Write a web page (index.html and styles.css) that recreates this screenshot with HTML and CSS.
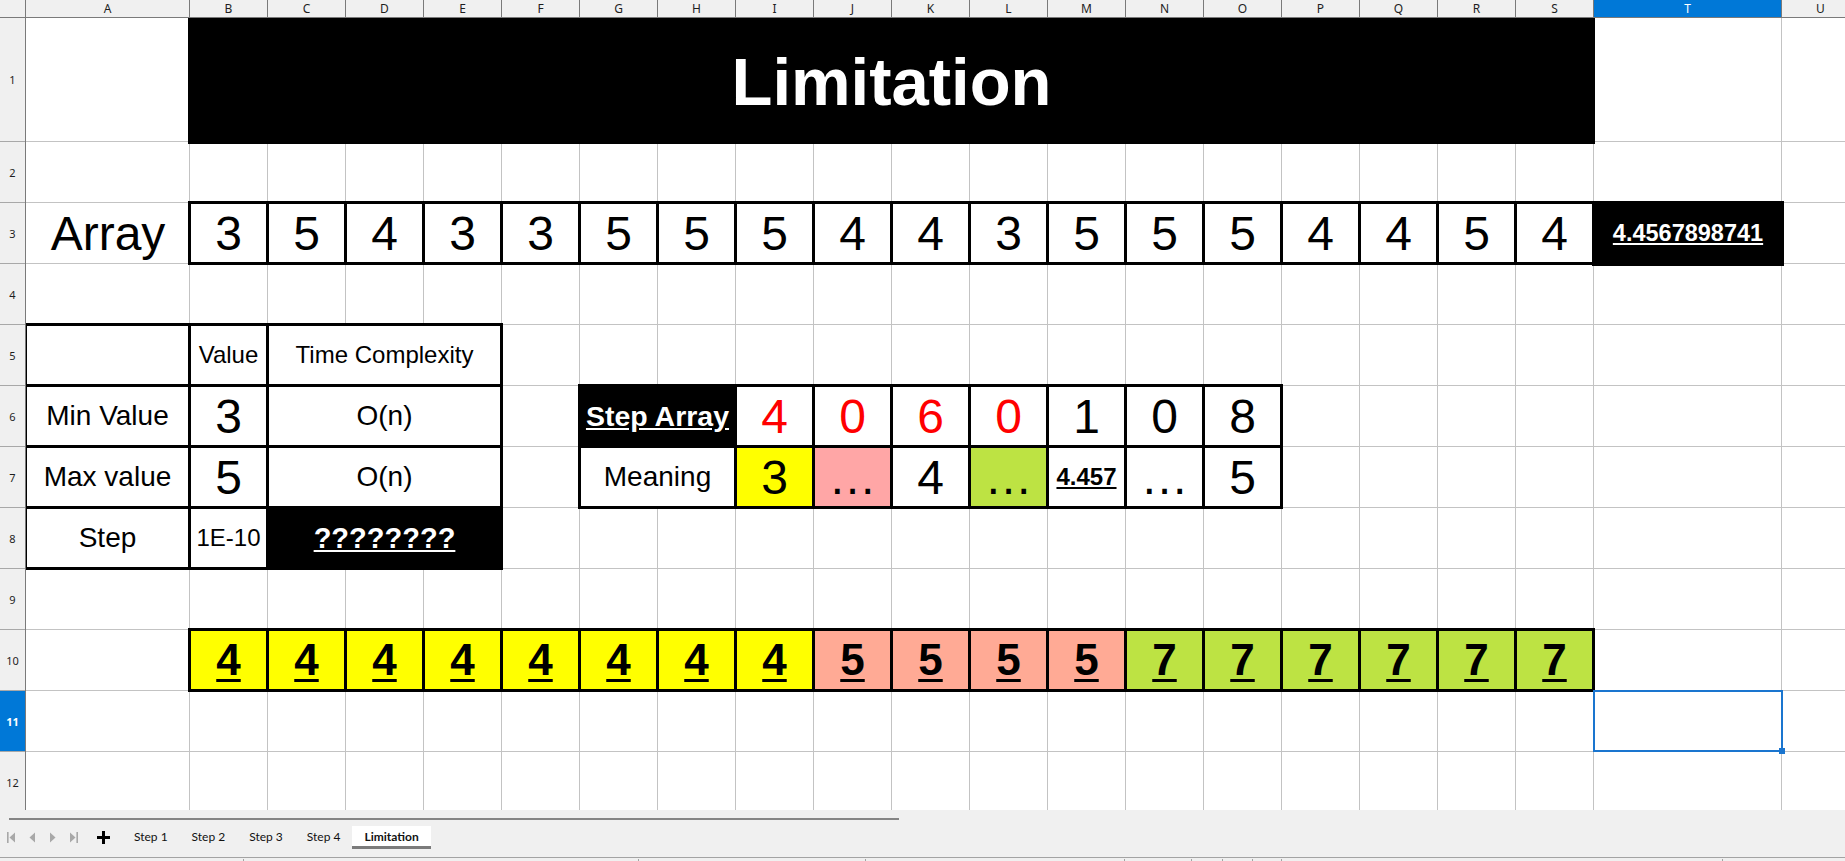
FILE: index.html
```html
<!DOCTYPE html>
<html lang="en">
<head>
<meta charset="utf-8">
<title>Limitation</title>
<link rel="stylesheet" href="styles.css">
</head>
<body>
<div class="frame">
  <div class="corner"></div>
  <div class="cols">
    <span>A</span><span>B</span><span>C</span><span>D</span><span>E</span><span>F</span><span>G</span><span>H</span><span>I</span><span>J</span><span>K</span><span>L</span><span>M</span><span>N</span><span>O</span><span>P</span><span>Q</span><span>R</span><span>S</span><span class="sel">T</span><span>U</span>
  </div>
  <div class="rows">
    <span>1</span><span>2</span><span>3</span><span>4</span><span>5</span><span>6</span><span>7</span><span>8</span><span>9</span><span>10</span><span class="sel">11</span><span>12</span>
  </div>
  <div class="sheet">
    <div class="title">Limitation</div>

    <div class="cell c1 r3 big">Array</div>
    <div class="cell bx big c2 r3">3</div>
    <div class="cell bx big c3 r3">5</div>
    <div class="cell bx big c4 r3">4</div>
    <div class="cell bx big c5 r3">3</div>
    <div class="cell bx big c6 r3">3</div>
    <div class="cell bx big c7 r3">5</div>
    <div class="cell bx big c8 r3">5</div>
    <div class="cell bx big c9 r3">5</div>
    <div class="cell bx big c10 r3">4</div>
    <div class="cell bx big c11 r3">4</div>
    <div class="cell bx big c12 r3">3</div>
    <div class="cell bx big c13 r3">5</div>
    <div class="cell bx big c14 r3">5</div>
    <div class="cell bx big c15 r3">5</div>
    <div class="cell bx big c16 r3">4</div>
    <div class="cell bx big c17 r3">4</div>
    <div class="cell bx big c18 r3">5</div>
    <div class="cell bx big c19 r3">4</div>
    <div class="cell hl c20 r3">4.4567898741</div>

    <div class="cell bx c1 r5"></div>
    <div class="cell bx sm c2 r5">Value</div>
    <div class="cell bx sm c3 s3 r5">Time Complexity</div>
    <div class="cell bx lbl c1 r6">Min Value</div>
    <div class="cell bx big c2 r6">3</div>
    <div class="cell bx lbl c3 s3 r6">O(n)</div>
    <div class="cell bx lbl c1 r7">Max value</div>
    <div class="cell bx big c2 r7">5</div>
    <div class="cell bx lbl c3 s3 r7">O(n)</div>
    <div class="cell bx lbl c1 r8">Step</div>
    <div class="cell bx sm c2 r8">1E-10</div>
    <div class="cell bx inv qm c3 s3 r8">????????</div>

    <div class="cell bx inv head c7 s2 r6">Step Array</div>
    <div class="cell bx big red c9 r6">4</div>
    <div class="cell bx big red c10 r6">0</div>
    <div class="cell bx big red c11 r6">6</div>
    <div class="cell bx big red c12 r6">0</div>
    <div class="cell bx big c13 r6">1</div>
    <div class="cell bx big c14 r6">0</div>
    <div class="cell bx big c15 r6">8</div>
    <div class="cell bx lbl c7 s2 r7">Meaning</div>
    <div class="cell bx big yel c9 r7">3</div>
    <div class="cell bx big pink c10 r7">…</div>
    <div class="cell bx big c11 r7">4</div>
    <div class="cell bx big lime c12 r7">…</div>
    <div class="cell bx mid c13 r7">4.457</div>
    <div class="cell bx big c14 r7">…</div>
    <div class="cell bx big c15 r7">5</div>

    <div class="cell bx res yel c2 r10">4</div>
    <div class="cell bx res yel c3 r10">4</div>
    <div class="cell bx res yel c4 r10">4</div>
    <div class="cell bx res yel c5 r10">4</div>
    <div class="cell bx res yel c6 r10">4</div>
    <div class="cell bx res yel c7 r10">4</div>
    <div class="cell bx res yel c8 r10">4</div>
    <div class="cell bx res yel c9 r10">4</div>
    <div class="cell bx res salmon c10 r10">5</div>
    <div class="cell bx res salmon c11 r10">5</div>
    <div class="cell bx res salmon c12 r10">5</div>
    <div class="cell bx res salmon c13 r10">5</div>
    <div class="cell bx res green c14 r10">7</div>
    <div class="cell bx res green c15 r10">7</div>
    <div class="cell bx res green c16 r10">7</div>
    <div class="cell bx res green c17 r10">7</div>
    <div class="cell bx res green c18 r10">7</div>
    <div class="cell bx res green c19 r10">7</div>

    <div class="cursor c20 r11"><i class="handle"></i></div>
  </div>
</div>

<div class="tabbar">
  <div class="thumb"></div>
  <div class="tabs">
    <div class="navbtn"><svg width="8" height="11" viewBox="0 0 8 11"><rect x="0" y="0" width="1.6" height="11" fill="#a8a8a8"/><path d="M8 0.5 L2.5 5.5 L8 10.5 Z" fill="#a8a8a8"/></svg></div>
    <div class="navbtn"><svg width="8" height="11" viewBox="0 0 8 11"><path d="M7 0.5 L1.5 5.5 L7 10.5 Z" fill="#a8a8a8"/></svg></div>
    <div class="navbtn"><svg width="8" height="11" viewBox="0 0 8 11"><path d="M1 0.5 L6.5 5.5 L1 10.5 Z" fill="#a8a8a8"/></svg></div>
    <div class="navbtn"><svg width="8" height="11" viewBox="0 0 8 11"><path d="M0 0.5 L5.5 5.5 L0 10.5 Z" fill="#a8a8a8"/><rect x="6.4" y="0" width="1.6" height="11" fill="#a8a8a8"/></svg></div>
    <div class="addbtn"><svg width="13" height="13" viewBox="0 0 13 13"><rect x="5" y="0" width="3" height="13" fill="#000"/><rect x="0" y="5" width="13" height="3" fill="#000"/></svg></div>
    <div class="tab">Step 1</div>
    <div class="tab">Step 2</div>
    <div class="tab">Step 3</div>
    <div class="tab">Step 4</div>
    <div class="tab active">Limitation</div>
  </div>
</div>

<div class="status">
  <div class="st pad">Sheet 5 of 5</div>
  <div class="st"></div>
  <div class="st pad2">Default</div>
  <div class="st mid-t">English (USA)</div>
  <div class="st"></div>
  <div class="st icon"><svg width="16" height="8" viewBox="0 0 16 8"><rect x="0.5" y="2.5" width="8" height="6" fill="none" stroke="#1a73c8"/><path d="M11 1.5 H15 M13 1.5 V8" stroke="#333" fill="none"/></svg></div>
  <div class="st icon"><svg width="10" height="8" viewBox="0 0 10 8"><rect x="0.5" y="0.5" width="9" height="9" fill="none" stroke="#d42020"/><rect x="2.5" y="0.5" width="5" height="3" fill="none" stroke="#d42020"/></svg></div>
  <div class="st"></div>
  <div class="st mid-t">Average: ; Sum: 0</div>
  <div class="st zoomer"><span class="minus"></span><span class="tick"></span><span class="bar"></span></div>
</div>
</body>
</html>
```
FILE: styles.css
```css
* { box-sizing: border-box; }
html, body { margin: 0; padding: 0; }
body {
  width: 1845px;
  height: 861px;
  overflow: hidden;
  background: #f0f0f0;
  font-family: "Liberation Sans", Arial, sans-serif;
  color: #000;
}

/* ---------- sheet frame ---------- */
.frame {
  display: grid;
  grid-template-columns: 26px 1819px;
  grid-template-rows: 18px 792px;
  height: 810px;
  overflow: hidden;
  background: #fff;
}
.corner {
  background: #f0f0f0;
  border-right: 1px solid #7a7a7a;
  border-bottom: 1px solid #7a7a7a;
}
.cols {
  display: grid;
  grid-template-columns: 164px repeat(18, 78px) 188px 78px;
  background: #f0f0f0;
  border-bottom: 1px solid #7a7a7a;
}
.cols span {
  display: flex;
  align-items: center;
  justify-content: center;
  border-right: 1px solid #7a7a7a;
  font: 12px "Noto Sans", sans-serif;
  color: #1e1e1e;
}
.cols .sel { background: #0078d7; color: #fff; }
.rows {
  display: grid;
  grid-template-rows: 124px repeat(12, 61px);
  background: #f0f0f0;
  border-right: 1px solid #7a7a7a;
}
.rows span {
  display: flex;
  align-items: center;
  justify-content: center;
  border-bottom: 1px solid #a8a8a8;
  font: 11px "Noto Sans", sans-serif;
  color: #1e1e1e;
}
.rows .sel { background: #0078d7; color: #fff; font-weight: bold; }

.sheet {
  display: grid;
  grid-template-columns: 164px repeat(18, 78px) 188px 78px;
  grid-template-rows: 124px repeat(12, 61px);
  overflow: hidden;
  position: relative;
  background-color: #fff;
  background-image:
    linear-gradient(#c3c3c3, #c3c3c3),
    linear-gradient(#c3c3c3, #c3c3c3),
    repeating-linear-gradient(to right, transparent 0 77px, #c3c3c3 77px 78px),
    linear-gradient(#c3c3c3, #c3c3c3),
    repeating-linear-gradient(to bottom, transparent 0 60px, #c3c3c3 60px 61px);
  background-size: 1px 100%, 1px 100%, 1404px 100%, 100% 1px, 100% 732px;
  background-position: 163px 0, 1755px 0, 164px 0, 0 123px, 0 124px;
  background-repeat: no-repeat;
}

/* placement */
.c1 { grid-column-start: 1; } .c2 { grid-column-start: 2; } .c3 { grid-column-start: 3; }
.c4 { grid-column-start: 4; } .c5 { grid-column-start: 5; } .c6 { grid-column-start: 6; }
.c7 { grid-column-start: 7; } .c8 { grid-column-start: 8; } .c9 { grid-column-start: 9; }
.c10 { grid-column-start: 10; } .c11 { grid-column-start: 11; } .c12 { grid-column-start: 12; }
.c13 { grid-column-start: 13; } .c14 { grid-column-start: 14; } .c15 { grid-column-start: 15; }
.c16 { grid-column-start: 16; } .c17 { grid-column-start: 17; } .c18 { grid-column-start: 18; }
.c19 { grid-column-start: 19; } .c20 { grid-column-start: 20; }
.s2 { grid-column-end: span 2; }
.s3 { grid-column-end: span 3; }
.r3 { grid-row-start: 3; } .r5 { grid-row-start: 5; } .r6 { grid-row-start: 6; }
.r7 { grid-row-start: 7; } .r8 { grid-row-start: 8; } .r10 { grid-row-start: 10; }
.r11 { grid-row-start: 11; }

/* cells */
.cell {
  display: flex;
  align-items: center;
  justify-content: center;
  white-space: nowrap;
  overflow: hidden;
}
.bx {
  margin: -2px -1px -1px -2px;
  border: 3px solid #000;
  background: #fff;
}
.title {
  grid-column: 2 / 20;
  grid-row: 1;
  margin: 0 -1px -2px -2px;
  background: #000;
  color: #fff;
  font-weight: bold;
  font-size: 67px;
  display: flex;
  align-items: center;
  justify-content: center;
}
.big { font-size: 48px; }
.lbl { font-size: 28px; }
.sm { font-size: 24px; }
.hl {
  margin: -2px -2px -2px -2px;
  background: #000;
  color: #fff;
  font-weight: bold;
  font-size: 23.5px;
  text-decoration: underline;
}
.inv {
  background: #000;
  color: #fff;
  font-weight: bold;
  text-decoration: underline;
}
.qm { font-size: 29px; }
.head { font-size: 28.5px; }
.mid { font-size: 24px; font-weight: bold; text-decoration: underline; }
.red { color: #ff0000; }
.yel { background: #ffff00; }
.pink { background: #ffa6a6; }
.lime { background: #bde343; }
.salmon { background: #ffaa95; }
.green { background: #bde343; }
.res {
  font-size: 44px;
  font-weight: bold;
  text-decoration: underline;
  text-decoration-thickness: 3px;
  text-underline-offset: 4px;
}

.cursor {
  margin: -1px -1px 0 -1px;
  border: 2px solid #1a75cf;
  position: relative;
}
.handle {
  position: absolute;
  right: -4px;
  bottom: -4px;
  width: 6px;
  height: 6px;
  background: #1a75cf;
}

/* ---------- sheet tabs ---------- */
.tabbar {
  height: 40px;
  background: #f0f0f0;
  border-bottom: 1px solid #a3a3a3;
  font-family: Lato, "Noto Sans", sans-serif;
}
.thumb {
  margin: 8px 0 0 9px;
  width: 890px;
  height: 2px;
  background: #858585;
}
.tabs {
  margin-top: 6px;
  height: 23px;
  display: flex;
}
.navbtn {
  width: 21px;
  display: flex;
  align-items: center;
  justify-content: center;
}
.addbtn {
  width: 38px;
  display: flex;
  align-items: center;
  justify-content: center;
}
.tab {
  padding: 0 12px;
  font-size: 12px;
  color: #111;
  display: flex;
  align-items: center;
  border-bottom: 3px solid transparent;
}
.tab.active {
  background: #fff;
  font-weight: bold;
  border-bottom-color: #7b7b7b;
}

/* ---------- status bar ---------- */
.status {
  height: 22px;
  display: grid;
  grid-template-columns: 244px 395px 227px 259px 67px 31px 30px 29px 441px 1fr;
  font: 12px Lato, "Noto Sans", sans-serif;
  color: #111;
  padding-top: 1px;
}
.st {
  border-right: 1px solid #a3a3a3;
  white-space: nowrap;
  line-height: 16px;
}
.st:last-child { border-right: 0; }
.pad { padding-left: 5px; }
.pad2 { padding-left: 9px; }
.mid-t { text-align: center; }
.icon { display: flex; justify-content: center; padding-top: 3px; }
.zoomer { position: relative; }
.zoomer .minus { position: absolute; left: 10px; top: 8px; width: 10px; height: 2px; background: #555; }
.zoomer .tick { position: absolute; left: 72px; top: 5px; width: 1px; height: 6px; background: #555; }
.zoomer .bar { position: absolute; left: 113px; top: 3px; width: 3px; height: 8px; border: 1px solid #555; }
```
